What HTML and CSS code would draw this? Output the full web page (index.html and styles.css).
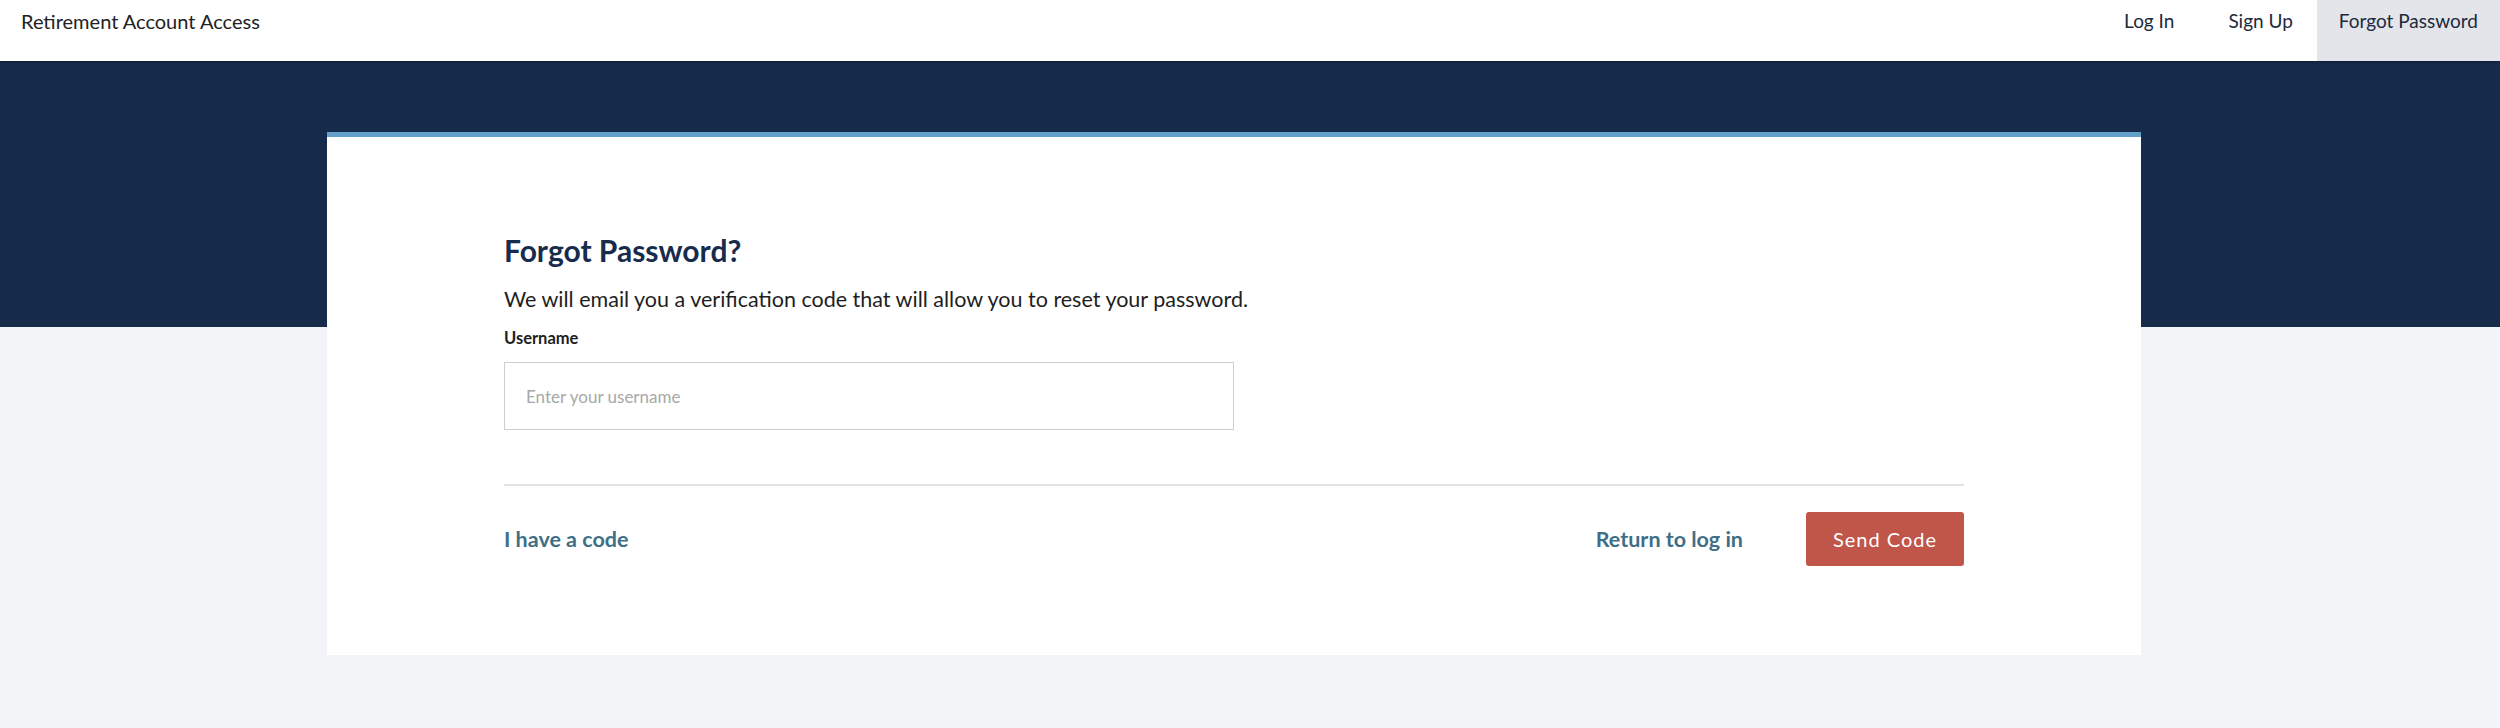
FILE: index.html
```html
<!DOCTYPE html>
<html lang="en">
<head>
<meta charset="utf-8">
<title>Forgot Password - Retirement Account Access</title>
<link rel="stylesheet" href="styles.css">
</head>
<body>
<header class="topbar">
  <div class="brand">Retirement Account Access</div>
  <nav class="nav">
    <a class="nav-item" href="#">Log In</a>
    <a class="nav-item" href="#">Sign Up</a>
    <a class="nav-item active" href="#">Forgot Password</a>
  </nav>
</header>
<main class="stage">
  <section class="card">
    <div class="card-body">
      <h1 class="title">Forgot Password?</h1>
      <p class="lead">We will email you a verification code that will allow you to reset your password.</p>
      <label class="field-label" for="username">Username</label>
      <input class="field-input" id="username" type="text" placeholder="Enter your username">
      <hr class="divider">
      <div class="actions">
        <a class="link" href="#">I have a code</a>
        <div class="actions-right">
          <a class="link" href="#">Return to log in</a>
          <button class="btn-primary" type="button">Send Code</button>
        </div>
      </div>
    </div>
  </section>
</main>
</body>
</html>
```
FILE: styles.css
```css
* { box-sizing: border-box; }

html, body {
  margin: 0;
  padding: 0;
}

body {
  background: #f3f4f7;
  font-family: Lato, "Liberation Sans", sans-serif;
  color: #1e1e1e;
  min-height: 728px;
}

.topbar {
  position: relative;
  z-index: 2;
  height: 61px;
  background: #ffffff;
  display: flex;
  align-items: stretch;
  justify-content: space-between;
  box-shadow: 0 1px 2px rgba(0, 0, 0, 0.35);
}

.brand {
  padding: 9px 0 0 21px;
  font-size: 20px;
  line-height: 24px;
  color: #222;
}

.nav {
  display: flex;
  align-items: stretch;
}

.nav-item {
  display: block;
  margin-left: 10px;
  padding: 9px 22px 0;
  font-size: 19px;
  line-height: 24px;
  color: #1d2a3c;
  text-decoration: none;
}

.nav-item.active {
  background: #e3e5ea;
  margin-left: 2px;
  padding-right: 22px;
}

.stage {
  padding-top: 71px;
  background: linear-gradient(#162a4a 0, #162a4a 266px, #f3f4f7 266px);
}

.card {
  margin-left: 327px;
  width: 1814px;
  background: #ffffff;
  border-top: 5px solid #62a0c9;
}

.card-body {
  padding: 95px 177px 89px;
}

.title {
  margin: 0;
  font-size: 30px;
  line-height: 36px;
  font-weight: 700;
  color: #172b4d;
}

.lead {
  margin: 17px 0 0;
  font-size: 21.5px;
  line-height: 28px;
  color: #1e1e1e;
}

.field-label {
  display: block;
  margin-top: 15px;
  font-size: 16.5px;
  line-height: 20px;
  font-weight: 700;
  color: #1e1e1e;
}

.field-input {
  display: block;
  margin-top: 14px;
  width: 730px;
  height: 68px;
  padding: 0 21px;
  border: 1px solid #cfcfcf;
  border-radius: 0;
  font-family: inherit;
  font-size: 17px;
  color: #1e1e1e;
  background: #fff;
  outline: none;
}

.field-input::placeholder {
  color: #a8a8a8;
}

.divider {
  margin: 54px 0 0;
  border: 0;
  border-top: 2px solid #e3e3e3;
  height: 0;
}

.actions {
  margin-top: 26px;
  display: flex;
  align-items: center;
  justify-content: space-between;
}

.actions-right {
  display: flex;
  align-items: center;
  gap: 63px;
}

.link {
  font-size: 21.5px;
  font-weight: 700;
  color: #3e6f86;
  text-decoration: none;
}

.btn-primary {
  width: 158px;
  height: 54px;
  border: 0;
  border-radius: 3px;
  background: #c0554a;
  color: #ffffff;
  font-family: inherit;
  font-size: 20px;
  letter-spacing: 1px;
  cursor: pointer;
}
```
